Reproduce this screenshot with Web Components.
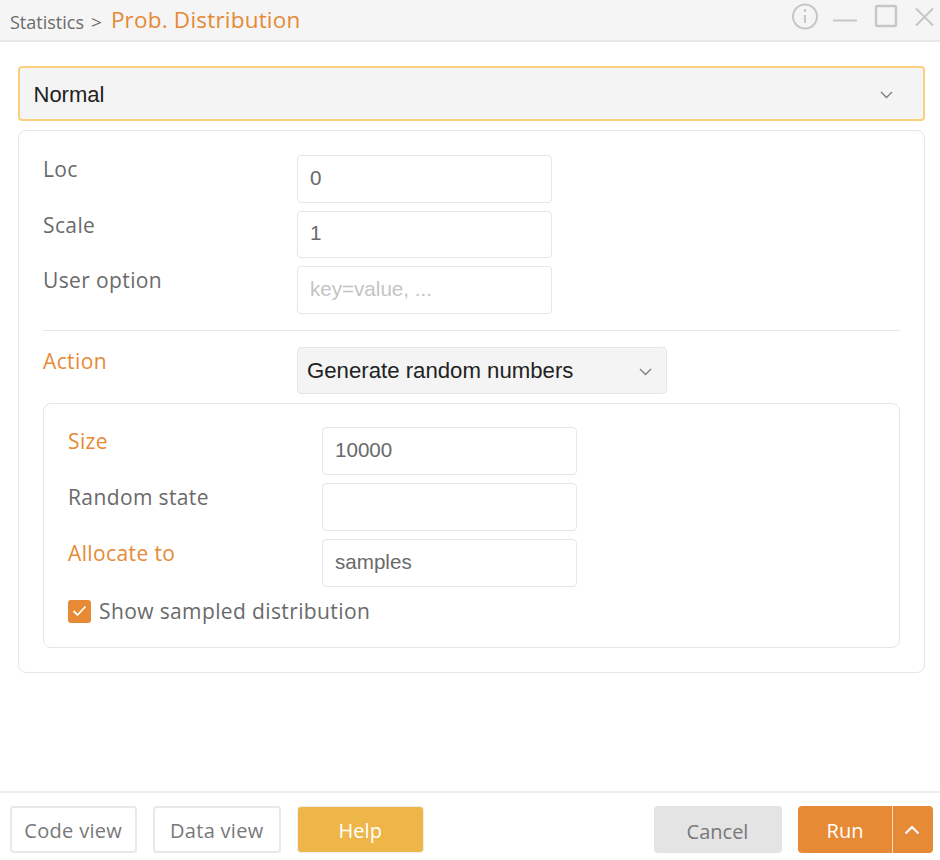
<!DOCTYPE html>
<html lang="en">
<head>
<meta charset="utf-8">
<title>Prob. Distribution</title>
<style>
  html, body { margin: 0; padding: 0; background: #fff; }
  body { width: 940px; height: 860px; overflow: hidden; font-family: "Open Sans", "Noto Sans", sans-serif; }
  dialog-shell { height: 860px; }
</style>
</head>
<body>
<dialog-shell>
  <title-bar slot="header" crumb="Statistics" page="Prob. Distribution"></title-bar>

  <select-box variant="main" value="Normal"></select-box>

  <panel-card variant="outer">
    <form-row label="Loc"><text-field value="0"></text-field></form-row>
    <form-row label="Scale"><text-field value="1"></text-field></form-row>
    <form-row label="User option"><text-field placeholder="key=value, ..."></text-field></form-row>
    <hr-line></hr-line>
    <form-row label="Action" required><select-box variant="inline" value="Generate random numbers"></select-box></form-row>
    <panel-card variant="inner">
      <form-row label="Size" required><text-field value="10000"></text-field></form-row>
      <form-row label="Random state"><text-field></text-field></form-row>
      <form-row label="Allocate to" required><text-field value="samples"></text-field></form-row>
      <check-option label="Show sampled distribution" checked></check-option>
    </panel-card>
  </panel-card>

  <footer-bar slot="footer">
    <action-button>Code view</action-button>
    <action-button>Data view</action-button>
    <action-button kind="help">Help</action-button>
    <action-button kind="cancel" slot="right">Cancel</action-button>
    <run-button slot="right"></run-button>
  </footer-bar>
</dialog-shell>

<script>
/** Small helper so every element sets up its open shadow root the same way. */
class BaseElement extends HTMLElement {
  render(html) {
    if (!this.shadowRoot) this.attachShadow({ mode: "open" });
    this.shadowRoot.innerHTML = html;
  }
}

class DialogShell extends BaseElement {
  connectedCallback() {
    this.render(`
      <style>
        :host { display: flex; flex-direction: column; width: 940px; background: #fff; }
        main { flex: 1; display: flex; flex-direction: column; gap: 9px; padding: 24px 15.5px 0 17.5px; }
      </style>
      <slot name="header"></slot>
      <main><slot></slot></main>
      <slot name="footer"></slot>
    `);
  }
}

class TitleBar extends BaseElement {
  connectedCallback() {
    const stroke = `fill="none" stroke="#c6c6c6" stroke-width="2"`;
    this.render(`
      <style>
        :host {
          display: flex; align-items: center; height: 40px; padding-left: 10px;
          background: #f5f5f5; border-bottom: 2px solid #e8e8e8;
        }
        .crumb { font-size: 18px; color: #6b6b6b; position: relative; top: 2px; }
        .sep { font-size: 19px; color: #6b6b6b; margin: 0 9px 0 7px; position: relative; top: 2px; }
        .page { font-size: 22.5px; color: #e68a35; letter-spacing: .2px; position: relative; top: -1px; }
        .icons { margin-left: auto; display: flex; }
        svg { display: block; }
      </style>
      <span class="crumb">${this.getAttribute("crumb")}</span>
      <span class="sep">&gt;</span>
      <span class="page">${this.getAttribute("page")}</span>
      <div class="icons">
        <svg width="160" height="40" viewBox="0 0 160 40">
          <circle cx="25" cy="16.5" r="12" ${stroke}/>
          <path d="M25 15v8" ${stroke}/>
          <circle cx="25" cy="10.5" r="1.4" fill="#c6c6c6"/>
          <path d="M53 20.5h24" ${stroke}/>
          <rect x="96" y="6" width="20" height="20" rx="1.5" fill="none" stroke="#c6c6c6" stroke-width="2.4"/>
          <path d="M153 8.5 136 25.5M136 8.5 153 25.5" ${stroke}/>
        </svg>
      </div>
    `);
  }
}

class SelectBox extends BaseElement {
  connectedCallback() {
    const main = this.getAttribute("variant") === "main";
    this.render(`
      <style>
        :host { display: block; }
        .box {
          display: flex; align-items: center; justify-content: space-between; box-sizing: border-box;
          background: #f4f4f4; font-family: "Liberation Sans", Arial, sans-serif; color: #222;
          ${main
            ? "width: 907px; height: 55px; padding: 2px 30px 0 14px; border: 2px solid #fbd07c; border-radius: 4px; font-size: 22px;"
            : "width: 370px; height: 47px; padding: 2px 14px 0 9px; border: 1px solid #e6e6e6; border-radius: 4px; font-size: 22.2px;"}
        }
        svg { display: block; margin-top: 1px; }
      </style>
      <div class="box">
        <span>${this.getAttribute("value")}</span>
        <svg width="13" height="8" viewBox="0 0 13 8"><path d="M1 1l5.5 5.5L12 1" fill="none" stroke="#7d7d7d" stroke-width="1.3"/></svg>
      </div>
    `);
  }
}

class PanelCard extends BaseElement {
  connectedCallback() {
    const inner = this.getAttribute("variant") === "inner";
    this.render(`
      <style>
        :host {
          display: flex; flex-direction: column; box-sizing: border-box; border: 1px solid #e6e6e6; border-radius: 8px; background: #fff;
          ${inner
            ? "width: 857px; height: 245px; margin-top: 1px; padding: 23px 24px 0; gap: 8px; --label-width: 254px; --field-height: 48px;"
            : "width: 906.5px; margin-left: .5px; height: 543px; padding: 24px 24px 0; gap: 8px; --label-width: 254px; --field-height: 47.6px;"}
        }
      </style>
      <slot></slot>
    `);
  }
}

class FormRow extends BaseElement {
  connectedCallback() {
    const required = this.hasAttribute("required");
    this.render(`
      <style>
        :host { display: grid; grid-template-columns: var(--label-width) auto; justify-content: start; }
        label {
          font-size: 21px; line-height: 28px; letter-spacing: .38px;
          color: ${required ? "#e68a35" : "#6a6a6a"};
        }
      </style>
      <label>${this.getAttribute("label")}</label>
      <slot></slot>
    `);
  }
}

class TextField extends BaseElement {
  connectedCallback() {
    const value = this.getAttribute("value");
    const placeholder = this.getAttribute("placeholder");
    this.render(`
      <style>
        :host {
          display: flex; align-items: center; box-sizing: border-box; width: 255px; height: var(--field-height); padding: 0 12px 2px;
          border: 1px solid #e6e6e6; border-radius: 4px; background: #fff;
          font-family: "Liberation Sans", Arial, sans-serif; font-size: 20.6px; color: #6a6a6a;
        }
        .ph { color: #c4c4c4; }
      </style>
      ${value ? `<span>${value}</span>` : placeholder ? `<span class="ph">${placeholder}</span>` : ""}
    `);
  }
}

class HrLine extends BaseElement {
  connectedCallback() {
    this.render(`<style>:host { display: block; height: 1px; background: #e8e8e8; margin: 8px 0; }</style>`);
  }
}

class CheckOption extends BaseElement {
  connectedCallback() {
    this.render(`
      <style>
        :host { display: flex; align-items: center; gap: 8px; height: 24px; margin-top: 4.5px; color: #6a6a6a; font-size: 21px; letter-spacing: .38px; }
        .tick { width: 23px; height: 23px; border-radius: 3px; background: #e68a35; display: flex; align-items: center; justify-content: center; }
        svg { display: block; }
      </style>
      <span class="tick"><svg width="15" height="12" viewBox="0 0 15 12"><path d="M1.5 6l4 4 8-8.5" fill="none" stroke="#fff" stroke-width="1.8"/></svg></span>
      <span>${this.getAttribute("label")}</span>
    `);
  }
}

class FooterBar extends BaseElement {
  connectedCallback() {
    this.render(`
      <style>
        :host {
          display: flex; justify-content: space-between; box-sizing: border-box; height: 69px;
          padding: 13px 7px 0 9.5px; border-top: 2px solid #ededed; background: #fff;
        }
        div { display: flex; gap: 16px; }
      </style>
      <div><slot></slot></div>
      <div><slot name="right"></slot></div>
    `);
  }
}

class ActionButton extends BaseElement {
  connectedCallback() {
    const kind = this.getAttribute("kind");
    const look = {
      help: "background: #eeb649; color: #fff; border: 1px solid #eee; font-weight: 500; padding-top: 1px;",
      cancel: "width: 128px; background: #e4e4e4; color: #787878; border: 2px solid #e4e4e4; padding: 4px 1px 0 0; letter-spacing: 0;"
    }[kind] || "background: #fff; color: #787878; border: 2px solid #e8e8e8; padding-top: 1px; letter-spacing: .3px;";
    this.render(`
      <style>
        :host {
          display: flex; align-items: center; justify-content: center; box-sizing: border-box;
          width: 127.5px; height: 47px; border-radius: 4px; font-size: 20px; ${look}
        }
      </style>
      <slot></slot>
    `);
  }
}

class RunButton extends BaseElement {
  connectedCallback() {
    this.render(`
      <style>
        :host { display: flex; height: 47px; color: #fff; font-size: 20px; font-weight: 500; }
        div { display: flex; align-items: center; justify-content: center; background: #e68a35; box-sizing: border-box; }
        .run { width: 94px; padding-top: 2px; border-radius: 4px 0 0 4px; }
        .more { width: 41px; padding-right: 2px; border-left: 1px solid #f6dcc0; border-radius: 0 4px 4px 0; }
        svg { display: block; }
      </style>
      <div class="run">Run</div>
      <div class="more"><svg width="16" height="10" viewBox="0 0 16 10"><path d="M1.5 8.5 8 2l6.5 6.5" fill="none" stroke="#fff" stroke-width="2"/></svg></div>
    `);
  }
}

customElements.define("dialog-shell", DialogShell);
customElements.define("title-bar", TitleBar);
customElements.define("select-box", SelectBox);
customElements.define("panel-card", PanelCard);
customElements.define("form-row", FormRow);
customElements.define("text-field", TextField);
customElements.define("hr-line", HrLine);
customElements.define("check-option", CheckOption);
customElements.define("footer-bar", FooterBar);
customElements.define("action-button", ActionButton);
customElements.define("run-button", RunButton);
</script>
</body>
</html>
